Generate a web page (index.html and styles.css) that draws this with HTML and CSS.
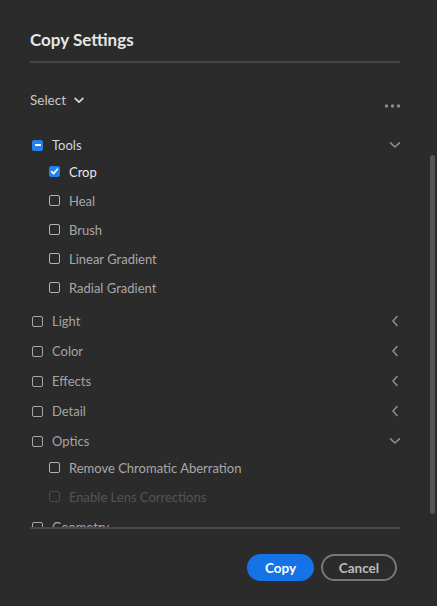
FILE: index.html
```html
<!DOCTYPE html>
<html>
<head>
<meta charset="utf-8">
<link rel="stylesheet" href="styles.css">
</head>
<body>
<div class="dialog">
  <h1 class="title">Copy Settings</h1>
  <div class="divider"></div>
  <div class="select-row">
    <div class="select">Select
      <svg class="sel-chev" width="10" height="7" viewBox="0 0 10 7"><path d="M1.2 1.5 L5 5.2 L8.8 1.5" fill="none" stroke="#d0d0d0" stroke-width="1.8" stroke-linecap="round" stroke-linejoin="round"/></svg>
    </div>
    <svg class="dots" width="17" height="20" viewBox="0 0 17 20"><circle cx="2.5" cy="16" r="1.7" fill="#8a8a8a"/><circle cx="8.5" cy="16" r="1.7" fill="#8a8a8a"/><circle cx="14.5" cy="16" r="1.7" fill="#8a8a8a"/></svg>
  </div>

  <div class="list">
    <div class="row parent">
      <span class="cb partial"><span class="minus"></span></span>
      <span class="lbl lbl-tools">Tools</span>
      <svg class="chev" width="12" height="8" viewBox="0 0 12 8"><path d="M1.5 1.8 L6 6 L10.5 1.8" fill="none" stroke="#8c8c8c" stroke-width="1.6" stroke-linecap="round" stroke-linejoin="round"/></svg>
    </div>
    <div class="children">
      <div class="row child">
        <span class="cb checked"><svg width="11" height="11" viewBox="0 0 11 11"><path d="M2.6 5.6 L4.6 7.6 L8.4 3.2" fill="none" stroke="#fff" stroke-width="1.7" stroke-linecap="round" stroke-linejoin="round"/></svg></span>
        <span class="lbl lbl-on">Crop</span>
      </div>
      <div class="row child"><span class="cb"></span><span class="lbl lbl-sub">Heal</span></div>
      <div class="row child"><span class="cb"></span><span class="lbl lbl-sub">Brush</span></div>
      <div class="row child"><span class="cb"></span><span class="lbl lbl-sub">Linear Gradient</span></div>
      <div class="row child"><span class="cb"></span><span class="lbl lbl-sub">Radial Gradient</span></div>
    </div>
    <div class="row parent"><span class="cb"></span><span class="lbl">Light</span>
      <svg class="chev-l" width="8" height="12" viewBox="0 0 8 12"><path d="M6 1.5 L2 6 L6 10.5" fill="none" stroke="#8c8c8c" stroke-width="1.6" stroke-linecap="round" stroke-linejoin="round"/></svg></div>
    <div class="row parent"><span class="cb"></span><span class="lbl">Color</span>
      <svg class="chev-l" width="8" height="12" viewBox="0 0 8 12"><path d="M6 1.5 L2 6 L6 10.5" fill="none" stroke="#8c8c8c" stroke-width="1.6" stroke-linecap="round" stroke-linejoin="round"/></svg></div>
    <div class="row parent"><span class="cb"></span><span class="lbl">Effects</span>
      <svg class="chev-l" width="8" height="12" viewBox="0 0 8 12"><path d="M6 1.5 L2 6 L6 10.5" fill="none" stroke="#8c8c8c" stroke-width="1.6" stroke-linecap="round" stroke-linejoin="round"/></svg></div>
    <div class="row parent"><span class="cb"></span><span class="lbl">Detail</span>
      <svg class="chev-l" width="8" height="12" viewBox="0 0 8 12"><path d="M6 1.5 L2 6 L6 10.5" fill="none" stroke="#8c8c8c" stroke-width="1.6" stroke-linecap="round" stroke-linejoin="round"/></svg></div>
    <div class="row parent"><span class="cb"></span><span class="lbl">Optics</span>
      <svg class="chev" width="12" height="8" viewBox="0 0 12 8"><path d="M1.5 1.8 L6 6 L10.5 1.8" fill="none" stroke="#8c8c8c" stroke-width="1.6" stroke-linecap="round" stroke-linejoin="round"/></svg></div>
    <div class="children children-last">
      <div class="row child"><span class="cb"></span><span class="lbl lbl-sub">Remove Chromatic Aberration</span></div>
      <div class="row child"><span class="cb disabled"></span><span class="lbl lbl-dis">Enable Lens Corrections</span></div>
    </div>
    <div class="row parent"><span class="cb"></span><span class="lbl">Geometry</span></div>
  </div>
  <div class="scrollbar"></div>

  <div class="footer">
    <button class="btn btn-primary">Copy</button>
    <button class="btn btn-secondary">Cancel</button>
  </div>
</div>
</body>
</html>
```

FILE: styles.css
```css
html, body {
  margin: 0;
  padding: 0;
  background: #2b2b2b;
}
body {
  font-family: Lato, "Open Sans", sans-serif;
  width: 437px;
  height: 606px;
  overflow: hidden;
}
.dialog {
  position: relative;
  width: 437px;
  height: 606px;
  box-sizing: border-box;
  padding: 28px 37px 0 30px;
}
.title {
  margin: 0;
  font-size: 17px;
  line-height: 24px;
  font-weight: 700;
  color: #e6e6e6;
}
.divider {
  margin-top: 9px;
  height: 2px;
  background: #464646;
}
.select-row {
  margin-top: 27px;
  height: 20px;
  display: flex;
  justify-content: space-between;
  align-items: center;
}
.select {
  display: flex;
  align-items: center;
  font-size: 13.5px;
  line-height: 20px;
  color: #c8c8c8;
}
.sel-chev {
  margin-left: 8px;
  margin-top: 1px;
}
.dots {
  margin-right: -1px;
}
.list {
  margin-top: 20px;
  height: 397px;
  overflow: hidden;
  border-bottom: 2px solid #494949;
}
.row {
  display: flex;
  align-items: center;
  font-size: 13px;
}
.parent {
  height: 30px;
}
.child {
  height: 29px;
  padding-left: 17px;
}
.children {
  margin-top: -3px;
  padding-bottom: 4px;
}
.children-last {
  padding-bottom: 1px;
}
.cb {
  width: 11px;
  height: 11px;
  box-sizing: border-box;
  border: 1.5px solid #a6a6a6;
  border-radius: 2px;
  margin-left: 2px;
  flex: none;
  display: flex;
  align-items: center;
  justify-content: center;
  position: relative;
}
.child .cb {
  border-color: #b4b4b4;
}
.cb.checked, .cb.partial {
  background: #2680eb;
  border-color: #2680eb;
}
.cb.checked svg {
  position: absolute;
  left: -1.5px;
  top: -1.5px;
}
.minus {
  width: 6px;
  height: 2px;
  background: #fff;
}
.cb.disabled {
  border-color: #4a4a4a;
}
.lbl {
  margin-left: 9px;
  color: #a4a4a4;
  flex: 1;
  line-height: 18px;
}
.lbl-tools {
  color: #d6d6d6;
}
.lbl-on {
  color: #e8e8e8;
}
.lbl-sub {
  color: #a8a8a8;
}
.lbl-dis {
  color: #545454;
}
.chev {
  margin-right: -1px;
}
.chev-l {
  margin-right: 1px;
}
.scrollbar {
  position: absolute;
  left: 430px;
  top: 155px;
  width: 5px;
  height: 359px;
  border-radius: 3px;
  background: #545454;
}
.footer {
  margin-top: 25px;
  display: flex;
  justify-content: flex-end;
  gap: 7px;
  padding-right: 3px;
}
.btn {
  height: 27px;
  border-radius: 14px;
  font-family: Lato, "Open Sans", sans-serif;
  font-weight: 700;
  font-size: 13.5px;
  padding: 0;
  box-sizing: border-box;
  cursor: pointer;
}
.btn-primary {
  width: 67px;
  background: #1473e6;
  border: none;
  color: #ffffff;
}
.btn-secondary {
  width: 76px;
  background: transparent;
  border: 2px solid #777777;
  color: #bdbdbd;
}
```
